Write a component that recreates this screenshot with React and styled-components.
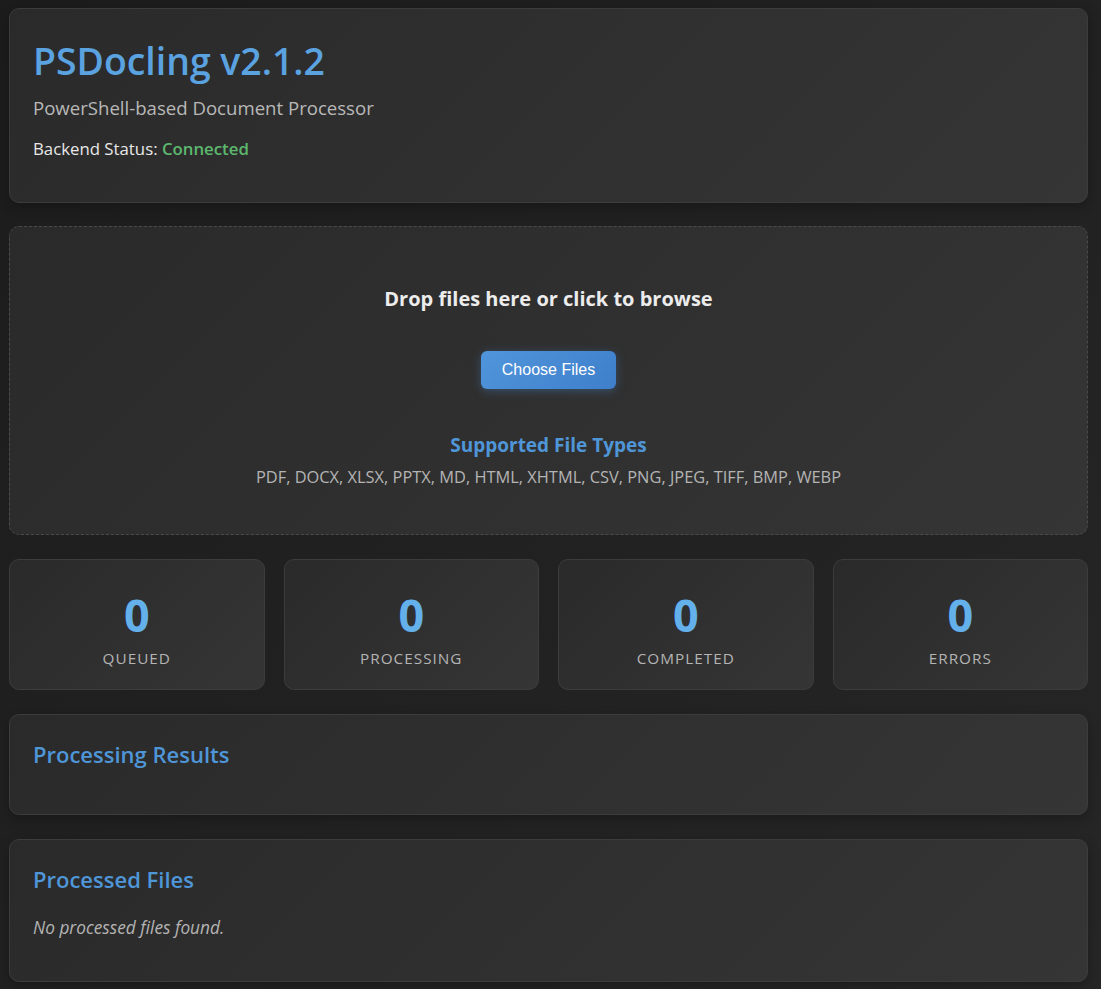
import React from "react";
import styled, { createGlobalStyle } from "styled-components";

const GlobalStyle = createGlobalStyle`
  html, body {
    margin: 0;
    padding: 0;
    background: linear-gradient(135deg, #1c1c1c 0%, #262626 100%);
    min-height: 100%;
  }
  body {
    font-family: "Open Sans", "Noto Sans", sans-serif;
    color: #e0e0e0;
  }
`;

const Page = styled.div`
  padding: 8px 13px 8px 9px;
  display: flex;
  flex-direction: column;
  gap: 24px;
`;

const Card = styled.section`
  background: linear-gradient(135deg, #2a2a2a 0%, #353535 100%);
  border: 1px solid #3c3c3c;
  border-radius: 10px;
  box-shadow: 0 4px 12px rgba(0, 0, 0, 0.25);
  padding: ${(p) => p.$pad || "24px 23px"};
`;

const Header = styled(Card)`
  margin-bottom: -1px;
`;

const Title = styled.h1`
  margin: 0;
  font-size: 37.4px;
  font-weight: 600;
  color: #5aa2e0;
  line-height: 1.2;
`;

const Subtitle = styled.p`
  margin: 11px 0 0;
  font-size: 18.6px;
  color: #b8b8b8;
`;

const Status = styled.p`
  margin: 17px 0 0;
  font-size: 16.8px;
  color: #e8e8e8;
`;

const Connected = styled.span`
  color: #5cb86e;
  font-weight: 600;
`;

const DropZone = styled.section`
  background: linear-gradient(135deg, #2a2a2a 0%, #353535 100%);
  border: 1px dashed #4a4a4a;
  border-radius: 10px;
  padding: 58px 24px 46px;
  display: flex;
  flex-direction: column;
  align-items: center;
  text-align: center;
`;

const DropText = styled.h3`
  margin: 0;
  font-size: 20px;
  font-weight: 700;
  color: #ececec;
`;

const Button = styled.button`
  margin-top: 39px;
  width: 135px;
  height: 38px;
  border: none;
  border-radius: 6px;
  background: linear-gradient(135deg, #5095db 0%, #3f7fca 100%);
  color: #fff;
  font-family: "Liberation Sans", Arial, sans-serif;
  font-size: 16px;
  box-shadow: 0 2px 10px rgba(74, 144, 217, 0.35);
  cursor: pointer;
`;

const TypesTitle = styled.h4`
  margin: 43px 0 0;
  font-size: 19px;
  font-weight: 700;
  color: #4f96d8;
`;

const TypesList = styled.p`
  margin: 7px 0 0;
  font-size: 16.4px;
  color: #b4b4b4;
`;

const StatsGrid = styled.div`
  display: grid;
  grid-template-columns: repeat(4, 1fr);
  gap: 19px;
`;

const StatCard = styled.div`
  background: linear-gradient(135deg, #2a2a2a 0%, #353535 100%);
  border: 1px solid #3c3c3c;
  border-radius: 10px;
  height: 131px;
  box-sizing: border-box;
  padding-top: 12px;
  display: flex;
  flex-direction: column;
  align-items: center;
  justify-content: center;
`;

const StatValue = styled.div`
  font-size: 45px;
  font-weight: 700;
  color: #64b0ea;
  line-height: 1;
`;

const StatLabel = styled.div`
  margin-top: 11px;
  font-size: 15.3px;
  letter-spacing: 1px;
  text-transform: uppercase;
  color: #b4b4b4;
`;

const SectionTitle = styled.h2`
  margin: 0;
  font-size: 22px;
  font-weight: 600;
  color: #4f96d8;
`;

const Empty = styled.p`
  margin: 22px 0 0;
  font-size: 17.3px;
  font-style: italic;
  color: #b4b4b4;
`;

const stats = [
  { label: "Queued", value: 0 },
  { label: "Processing", value: 0 },
  { label: "Completed", value: 0 },
  { label: "Errors", value: 0 },
];

export default function App() {
  return (
    <>
      <GlobalStyle />
      <Page>
        <Header $pad="30px 23px 42px">
          <Title>PSDocling v2.1.2</Title>
          <Subtitle>PowerShell-based Document Processor</Subtitle>
          <Status>
            Backend Status: <Connected>Connected</Connected>
          </Status>
        </Header>

        <DropZone>
          <DropText>Drop files here or click to browse</DropText>
          <Button>Choose Files</Button>
          <TypesTitle>Supported File Types</TypesTitle>
          <TypesList>
            PDF, DOCX, XLSX, PPTX, MD, HTML, XHTML, CSV, PNG, JPEG, TIFF, BMP, WEBP
          </TypesList>
        </DropZone>

        <StatsGrid>
          {stats.map((s) => (
            <StatCard key={s.label}>
              <StatValue>{s.value}</StatValue>
              <StatLabel>{s.label}</StatLabel>
            </StatCard>
          ))}
        </StatsGrid>

        <Card $pad="24px 23px 45px">
          <SectionTitle>Processing Results</SectionTitle>
        </Card>

        <Card $pad="24px 23px 42px">
          <SectionTitle>Processed Files</SectionTitle>
          <Empty>No processed files found.</Empty>
        </Card>
      </Page>
    </>
  );
}
